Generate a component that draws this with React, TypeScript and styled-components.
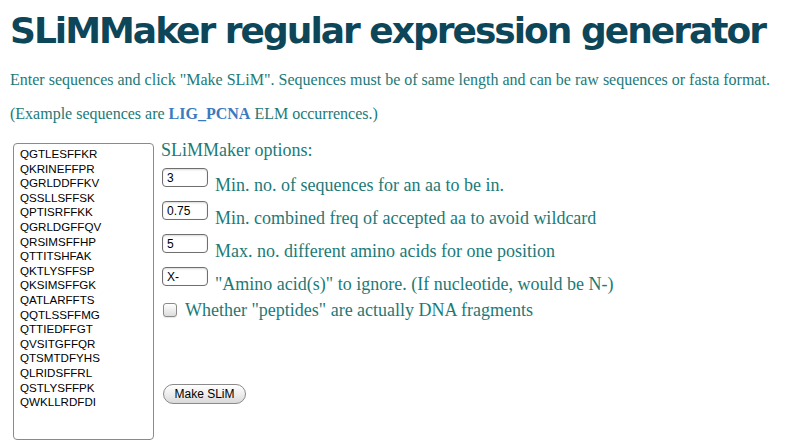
import React from 'react';
import styled, { createGlobalStyle } from 'styled-components';

const GlobalStyle = createGlobalStyle`
	body {
		margin: 0;
		background: #ffffff;
	}
`;

const Page = styled.div`
	padding: 9px 10px 0 10px;
	font-family: 'Liberation Serif', Georgia, serif;
	color: #1b7a78;
`;

const Title = styled.h1`
	margin: 0;
	font-family: 'DejaVu Sans', Verdana, sans-serif;
	font-weight: bold;
	font-size: 36px;
	letter-spacing: -2px;
	line-height: 44px;
	color: #0d4658;
	white-space: nowrap;
`;

const Intro = styled.p`
	margin: 17px 0 0 0;
	font-size: 16px;
	line-height: 20px;
`;

const Example = styled.p`
	margin: 14px 0 0 0;
	font-size: 16px;
	line-height: 20px;
`;

const ElmLink = styled.a`
	color: #3a7bbf;
	font-weight: bold;
	text-decoration: none;
`;

const FormArea = styled.div`
	display: flex;
	gap: 7px;
	margin-top: 19px;
	padding-left: 3px;
`;

const SequenceBox = styled.textarea`
	box-sizing: border-box;
	width: 141px;
	height: 297px;
	margin: 0;
	padding: 3px 6px;
	border: 1px solid #8a8a8a;
	border-radius: 4px;
	resize: none;
	font-family: 'Liberation Sans', Helvetica, Arial, sans-serif;
	font-size: 11.6px;
	line-height: 14.6px;
	color: #000;
	overflow: hidden;
`;

const Options = styled.div`
	display: flex;
	flex-direction: column;
`;

const OptionsHeading = styled.div`
	font-size: 18px;
	line-height: 20px;
	margin-top: -3px;
`;

const OptionRow = styled.label<{ $first?: boolean }>`
	display: flex;
	align-items: flex-start;
	gap: 7px;
	margin-top: ${props => props.$first ? '8px' : '14px'};
	height: 19px;
`;

const ValueInput = styled.input`
	box-sizing: border-box;
	width: 46px;
	height: 19px;
	margin: 0 0 0 1px;
	padding: 1px 4px;
	border: 1px solid #6f6f6f;
	border-radius: 4px;
	font-family: 'Liberation Sans', Helvetica, Arial, sans-serif;
	font-size: 12px;
	color: #000;
	box-shadow: inset 0 1px 2px rgba(0, 0, 0, 0.15);
`;

const OptionText = styled.span<{ $inline?: boolean }>`
	font-size: 18px;
	line-height: 20px;
	margin-top: ${props => props.$inline ? '0' : '7px'};
	white-space: nowrap;
`;

const CheckRow = styled.label`
	display: flex;
	align-items: center;
	gap: 8px;
	margin-top: 14px;
`;

const CheckBox = styled.span`
	box-sizing: border-box;
	width: 14px;
	height: 14px;
	margin-left: 2px;
	border: 1px solid #8a8a8a;
	border-radius: 3px;
	background: linear-gradient(#ffffff, #dcdcdc);
	box-shadow: 0 1px 1px rgba(0, 0, 0, 0.1);
`;

const MakeButton = styled.button`
	box-sizing: border-box;
	width: 83px;
	height: 20px;
	margin: 64px 0 0 2px;
	padding: 0;
	border: 1px solid #8a8a8a;
	border-radius: 10px;
	background: linear-gradient(#ffffff, #ececec 55%, #d9d9d9);
	font-family: 'Liberation Sans', Helvetica, Arial, sans-serif;
	font-size: 12px;
	color: #000;
`;

const sequences = [
	'QGTLESFFKR', 'QKRINEFFPR', 'QGRLDDFFKV', 'QSSLLSFFSK', 'QPTISRFFKK',
	'QGRLDGFFQV', 'QRSIMSFFHP', 'QTTITSHFAK', 'QKTLYSFFSP', 'QKSIMSFFGK',
	'QATLARFFTS', 'QQTLSSFFMG', 'QTTIEDFFGT', 'QVSITGFFQR', 'QTSMTDFYHS',
	'QLRIDSFFRL', 'QSTLYSFFPK', 'QWKLLRDFDI',
];

const options = [
	{ value: '3', text: 'Min. no. of sequences for an aa to be in.' },
	{ value: '0.75', text: 'Min. combined freq of accepted aa to avoid wildcard' },
	{ value: '5', text: 'Max. no. different amino acids for one position' },
	{ value: 'X-', text: '"Amino acid(s)" to ignore. (If nucleotide, would be N-)' },
];

const App = () => {
	return <Page>
		<GlobalStyle />
		<Title>SLiMMaker regular expression generator</Title>
		<Intro>Enter sequences and click "Make SLiM". Sequences must be of same length and can be raw sequences or fasta format.</Intro>
		<Example>(Example sequences are <ElmLink href='#'>LIG_PCNA</ElmLink> ELM occurrences.)</Example>
		<FormArea>
			<SequenceBox defaultValue={sequences.join('\n')} spellCheck={false} />
			<Options>
				<OptionsHeading>SLiMMaker options:</OptionsHeading>
				{options.map((o, i) => <OptionRow key={o.value} $first={i === 0}>
					<ValueInput defaultValue={o.value} />
					<OptionText>{o.text}</OptionText>
				</OptionRow>)}
				<CheckRow>
					<CheckBox />
					<OptionText $inline>Whether "peptides" are actually DNA fragments</OptionText>
				</CheckRow>
				<MakeButton>Make SLiM</MakeButton>
			</Options>
		</FormArea>
	</Page>;
};

export default App;
